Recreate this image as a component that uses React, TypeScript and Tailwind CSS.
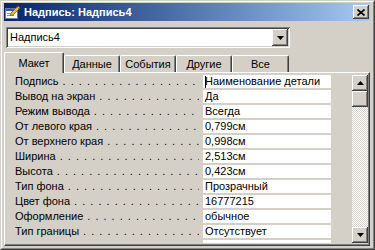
import React from 'react';

const rows: [string, string][] = [
  ['Подпись', 'Наименование детали'],
  ['Вывод на экран', 'Да'],
  ['Режим вывода', 'Всегда'],
  ['От левого края', '0,799см'],
  ['От верхнего края', '0,998см'],
  ['Ширина', '2,513см'],
  ['Высота', '0,423см'],
  ['Тип фона', 'Прозрачный'],
  ['Цвет фона', '16777215'],
  ['Оформление', 'обычное'],
  ['Тип границы', 'Отсутствует'],
  ['', ''],
];

const tabs = [
  { label: 'Данные', w: 'w-[56px]' },
  { label: 'События', w: 'w-[56px]' },
  { label: 'Другие', w: 'w-[56px]' },
  { label: 'Все', w: 'w-[57px]' },
];

const dots = '. '.repeat(40);

const raised =
  'bg-[#d4d0c8] shadow-[inset_-1px_-1px_#404040,inset_1px_1px_#ffffff,inset_-2px_-2px_#808080,inset_2px_2px_#d4d0c8]';

function Arrow({ up }: { up?: boolean }) {
  return (
    <svg width="7" height="4" viewBox="0 0 7 4">
      {up ? <path d="M3.5 0 L7 4 L0 4 Z" fill="#000" /> : <path d="M0 0 L7 0 L3.5 4 Z" fill="#000" />}
    </svg>
  );
}

function FormIcon() {
  return (
    <svg width="16" height="16" viewBox="0 0 16 16">
      <rect x="0.5" y="4.5" width="12" height="10" fill="#ffffff" stroke="#6b7a99" />
      <rect x="1" y="5" width="11" height="2" fill="#2a56c6" />
      <rect x="2" y="9" width="5" height="1" fill="#8090b0" />
      <rect x="2" y="11" width="7" height="1" fill="#8090b0" />
      <path d="M6 9 L13 2 L15 4 L8 11 L5.5 11.5 Z" fill="#e8b83a" stroke="#8a6412" strokeWidth="0.8" />
      <path d="M12 3 L14 5" stroke="#8a6412" strokeWidth="0.8" />
    </svg>
  );
}

export default function App() {
  return (
    <div
      className="w-[375px] h-[250px] border border-t-[#d4d0c8] border-l-[#d4d0c8] border-r-[#404040] border-b-[#404040] bg-[#d4d0c8] text-[11px] text-black"
      style={{ fontFamily: '"Liberation Sans", Arial, sans-serif' }}
    >
      <div className="flex h-full flex-col border border-t-white border-l-white border-r-[#808080] border-b-[#808080] pt-px pl-[2px] pr-[3px] pb-[2px]">
        {/* title bar */}
        <div className="flex h-[18px] shrink-0 items-center bg-linear-to-r from-[#0a246a] to-[#a6caf0] pl-px pr-[1px]">
          <FormIcon />
          <span className="ml-[3px] font-bold text-white">Надпись: Надпись4</span>
          <div className={`ml-auto flex h-[14px] w-[16px] items-center justify-center ${raised}`}>
            <svg width="8" height="7" viewBox="0 0 8 7">
              <path d="M0.5 0.5 L7.5 6.5 M7.5 0.5 L0.5 6.5" stroke="#000" strokeWidth="1.6" />
            </svg>
          </div>
        </div>

        {/* combo box */}
        <div className="mt-[6px] ml-[2px] flex h-[21px] w-[284px] shrink-0 bg-white p-[2px] shadow-[inset_1px_1px_#808080,inset_-1px_-1px_#ffffff,inset_2px_2px_#404040,inset_-2px_-2px_#d4d0c8]">
          <span className="flex-1 pl-[2px] leading-[17px]">Надпись4</span>
          <div className={`flex h-[17px] w-[16px] items-center justify-center ${raised}`}>
            <Arrow />
          </div>
        </div>

        {/* tabs */}
        <div className="mt-[4px] flex h-[20px] shrink-0 items-end">
          <div className="relative z-10 -mb-px flex h-[21px] w-[60px] items-center justify-center rounded-t-[2px] border-t border-l border-r border-t-white border-l-white border-r-[#404040] bg-[#d4d0c8] shadow-[inset_-1px_0_#808080]">
            Макет
          </div>
          {tabs.map((t) => (
            <div
              key={t.label}
              className={`flex h-[17px] ${t.w} items-center justify-center rounded-t-[2px] border-t border-l border-r border-t-white border-l-white border-r-[#404040] pt-px shadow-[inset_-1px_0_#808080]`}
            >
              {t.label}
            </div>
          ))}
        </div>

        {/* panel */}
        <div className="flex min-h-0 flex-1 border border-t-white border-l-white border-r-[#404040] border-b-[#404040] pt-[2px] pb-[2px] shadow-[inset_-1px_-1px_#808080]">
          <div className="flex min-h-0 flex-col overflow-hidden pl-[10px]">
            {rows.map(([label, value], i) => (
              <div key={i} className="flex h-[15px] shrink-0">
                <div className="flex h-[13px] w-[184px] overflow-hidden whitespace-nowrap leading-[13px]">
                  {label && (
                    <>
                      <span>{label}</span>
                      <span className="ml-[4px] tracking-[1px]">{dots}</span>
                    </>
                  )}
                </div>
                <div className="ml-[4px] flex h-[13px] w-[128px] items-center overflow-hidden whitespace-nowrap bg-white pl-[2px] leading-[13px]">
                  {i === 0 && <span className="mr-[-1px] h-[12px] w-px shrink-0 bg-black" />}
                  {value}
                </div>
              </div>
            ))}
          </div>

          {/* scrollbar */}
          <div className="ml-[21px] flex w-[16px] flex-col">
            <div className={`flex h-[16px] shrink-0 items-center justify-center ${raised}`}>
              <Arrow up />
            </div>
            <div className={`h-[16px] shrink-0 ${raised}`} />
            <div className="flex-1 bg-[repeating-conic-gradient(#d4d0c8_0%_25%,#ffffff_0%_50%)] bg-[length:2px_2px]" />
            <div className={`flex h-[16px] shrink-0 items-center justify-center ${raised}`}>
              <Arrow />
            </div>
          </div>
        </div>
      </div>
    </div>
  );
}
